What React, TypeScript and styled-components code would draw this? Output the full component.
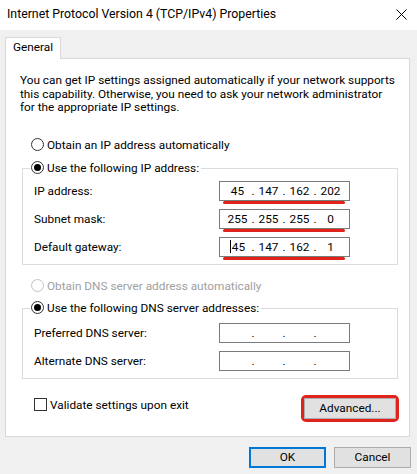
import React from 'react';
import styled, { createGlobalStyle } from 'styled-components';

const GlobalStyle = createGlobalStyle`
    html, body {
        margin: 0;
        padding: 0;
        background: #f0f0f0;
    }
    body {
        font-family: Roboto, 'Noto Sans', sans-serif;
        font-size: 11.8px;
        color: #000;
    }
`;

const Window = styled.div`
    width: 417px;
    height: 474px;
    background: #f0f0f0;
    display: flex;
    flex-direction: column;
`;

const TitleBar = styled.div`
    height: 30px;
    background: #fff;
    display: flex;
    align-items: center;
    justify-content: space-between;
    padding: 0 10px 2px 7px;
    box-sizing: border-box;
    font-size: 12.3px;
`;

const CloseIcon = () => (
    <svg width="11" height="11" viewBox="0 0 11 11">
        <path d="M0.5 0.5 L10.5 10.5 M10.5 0.5 L0.5 10.5" stroke="#000" strokeWidth="1" />
    </svg>
);

const Body = styled.div`
    padding: 7px 7px 0 5px;
`;

const TabStrip = styled.div`
    display: flex;
`;

const Tab = styled.div`
    position: relative;
    z-index: 1;
    width: 56px;
    height: 22px;
    margin-bottom: -1px;
    box-sizing: border-box;
    padding: 2px 0 0 7px;
    background: #fff;
    border: 1px solid #d9d9d9;
    border-bottom: none;
`;

const Panel = styled.div`
    background: #fff;
    border: 1px solid #d9d9d9;
    padding: 15px 10px 14px 14px;
`;

const Intro = styled.p`
    margin: 0;
    line-height: 13.5px;
    white-space: nowrap;
`;

const OptionRow = styled.div<{ $gap: number; $disabled?: boolean }>`
    display: flex;
    align-items: center;
    gap: 3px;
    height: 16px;
    margin: ${(p) => p.$gap}px 0 0 11px;
    color: ${(p) => (p.$disabled ? '#a0a0a0' : '#000')};
`;

const Radio = styled.span<{ $checked?: boolean; $disabled?: boolean }>`
    width: 13px;
    height: 13px;
    box-sizing: border-box;
    border-radius: 50%;
    border: 1px solid ${(p) => (p.$disabled ? '#c4c4c4' : '#333')};
    display: flex;
    align-items: center;
    justify-content: center;
    flex-shrink: 0;

    &::after {
        content: '';
        display: ${(p) => (p.$checked ? 'block' : 'none')};
        width: 7px;
        height: 7px;
        border-radius: 50%;
        background: #000;
    }
`;

const Group = styled.div<{ $gap: number }>`
    border: 1px solid #dcdcdc;
    margin: ${(p) => p.$gap}px 1px 0 2px;
    padding: 0 0 7px 11px;
`;

const GroupHead = styled.div`
    display: flex;
    align-items: center;
    gap: 3px;
    height: 16px;
    width: fit-content;
    margin: -9px 0 0 -4px;
    padding: 0 2px 0 1px;
    background: #fff;
`;

const Fields = styled.div<{ $top: number }>`
    display: grid;
    grid-template-columns: 185px 131px;
    grid-auto-rows: 20px;
    row-gap: 8px;
    margin-top: ${(p) => p.$top}px;
    align-items: center;
`;

const IpBox = styled.div<{ $mark?: boolean }>`
    position: relative;
    height: 20px;
    box-sizing: border-box;
    border: 1px solid #7a7a7a;
    display: flex;
    align-items: center;
    padding: 0 4px;

    &::after {
        content: '';
        display: ${(p) => (p.$mark ? 'block' : 'none')};
        position: absolute;
        left: 3px;
        right: 4px;
        bottom: -4px;
        height: 3px;
        border-radius: 2px;
        background: #e0231d;
    }
`;

const Octet = styled.span`
    width: 27px;
    text-align: center;
`;

const Dot = styled.span`
    width: 4px;
    text-align: center;
`;

const Caret = styled.span`
    display: inline-block;
    width: 1px;
    height: 13px;
    margin-right: 1px;
    vertical-align: -2px;
    background: #000;
`;

const BottomRow = styled.div`
    display: flex;
    justify-content: space-between;
    align-items: flex-start;
    margin-top: 16px;
`;

const CheckLabel = styled.div`
    display: flex;
    align-items: center;
    gap: 3px;
    margin: 3px 0 0 14px;
`;

const CheckBox = styled.span`
    width: 13px;
    height: 13px;
    box-sizing: border-box;
    border: 1px solid #333;
    background: #fff;
`;

const Highlight = styled.div`
    border: 3px solid #e0231d;
    border-radius: 5px;
    padding: 0;
`;

const Button = styled.div<{ $width: number; $default?: boolean }>`
    width: ${(p) => p.$width}px;
    height: 21px;
    box-sizing: border-box;
    background: #e1e1e1;
    border: ${(p) => (p.$default ? '2px solid #0078d7' : '1px solid #adadad')};
    display: flex;
    align-items: center;
    justify-content: center;
`;

const Footer = styled.div`
    display: flex;
    justify-content: flex-end;
    gap: 8px;
    padding: 10px 6px 0 0;
`;

type IpProps = { octets?: string[]; mark?: boolean; caret?: boolean };

const IpField: React.FC<IpProps> = ({ octets = ['', '', '', ''], mark, caret }) => (
    <IpBox $mark={mark}>
        {octets.map((o, i) => (
            <React.Fragment key={i}>
                {i > 0 && <Dot>.</Dot>}
                <Octet>
                    {i === 0 && caret && <Caret />}
                    {o}
                </Octet>
            </React.Fragment>
        ))}
    </IpBox>
);

const App: React.FC = () => (
    <Window>
        <GlobalStyle />
        <TitleBar>
            <span>Internet Protocol Version 4 (TCP/IPv4) Properties</span>
            <CloseIcon />
        </TitleBar>
        <Body>
            <TabStrip>
                <Tab>General</Tab>
            </TabStrip>
            <Panel>
                <Intro>
                    You can get IP settings assigned automatically if your network supports
                    <br />
                    this capability. Otherwise, you need to ask your network administrator
                    <br />
                    for the appropriate IP settings.
                </Intro>

                <OptionRow $gap={22}>
                    <Radio />
                    Obtain an IP address automatically
                </OptionRow>
                <Group $gap={15}>
                    <GroupHead>
                        <Radio $checked />
                        Use the following IP address:
                    </GroupHead>
                    <Fields $top={5}>
                        <span>IP address:</span>
                        <IpField octets={['45', '147', '162', '202']} mark />
                        <span>Subnet mask:</span>
                        <IpField octets={['255', '255', '255', '0']} mark />
                        <span>Default gateway:</span>
                        <IpField octets={['45', '147', '162', '1']} mark caret />
                    </Fields>
                </Group>

                <OptionRow $gap={13} $disabled>
                    <Radio $disabled />
                    Obtain DNS server address automatically
                </OptionRow>
                <Group $gap={14}>
                    <GroupHead>
                        <Radio $checked />
                        Use the following DNS server addresses:
                    </GroupHead>
                    <Fields $top={7}>
                        <span>Preferred DNS server:</span>
                        <IpField />
                        <span>Alternate DNS server:</span>
                        <IpField />
                    </Fields>
                </Group>

                <BottomRow>
                    <CheckLabel>
                        <CheckBox />
                        Validate settings upon exit
                    </CheckLabel>
                    <Highlight>
                        <Button $width={92}>Advanced...</Button>
                    </Highlight>
                </BottomRow>
            </Panel>
        </Body>
        <Footer>
            <Button $width={77} $default>
                OK
            </Button>
            <Button $width={77}>Cancel</Button>
        </Footer>
    </Window>
);

export default App;
